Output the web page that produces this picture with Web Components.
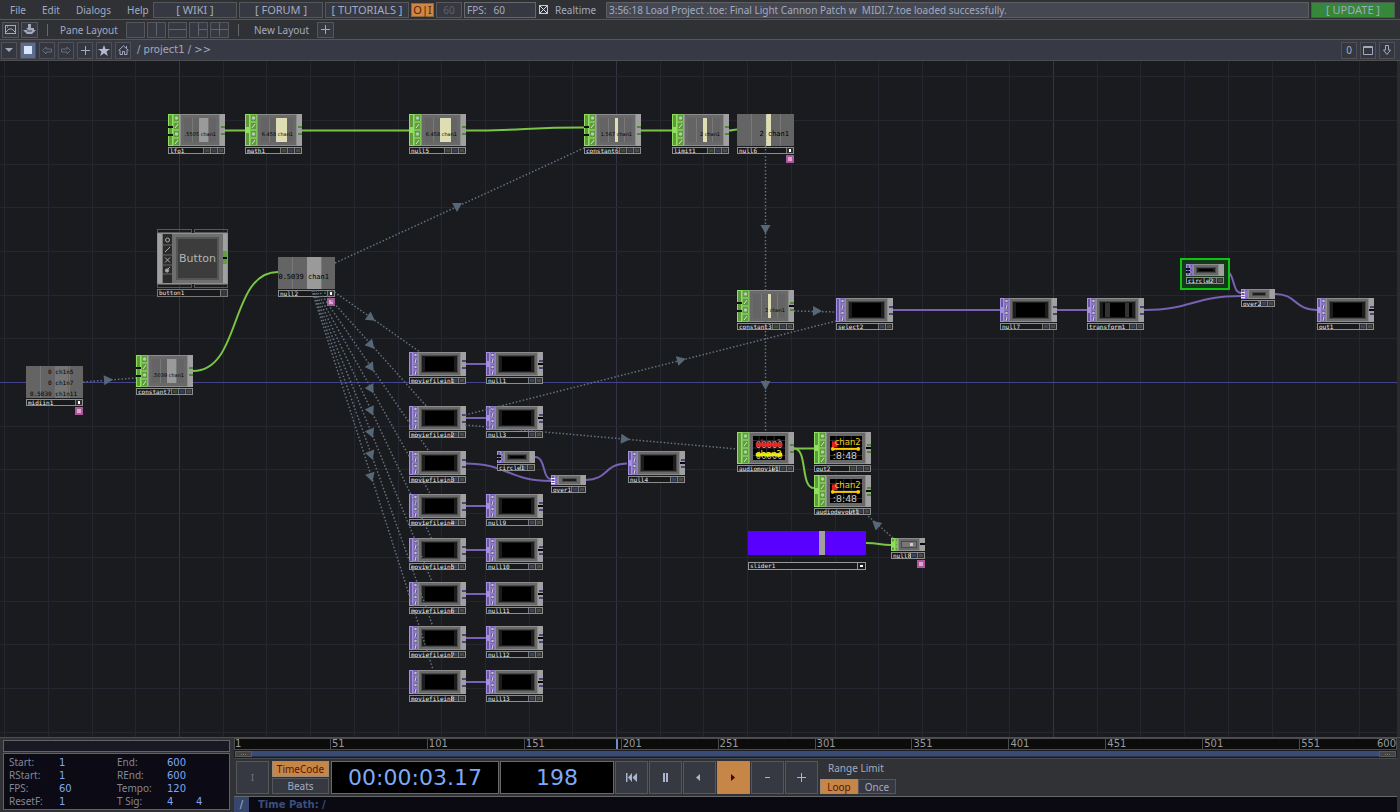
<!DOCTYPE html>
<html lang="en">
<head>
<meta charset="utf-8">
<title>project1</title>
<style>
html, body { margin: 0; height: 100%; background: #1a1b1e; }
body { font: 10px/14px "Noto Sans", sans-serif; color: #a3aac0; overflow: hidden; }
</style>
</head>
<body>
<td-app></td-app>
<script>
const SVG = (w, h, body, extra = '') => `<svg width="${w}" height="${h}" viewBox="0 0 ${w} ${h}" ${extra} aria-hidden="true">${body}</svg>`;

const BASE = `
  :host, *, *::before, *::after { box-sizing: border-box; }
  button, input, a { font: inherit; color: inherit; margin: 0; padding: 0; border-radius: 0; text-decoration: none; }
  button { background: #363942; border: 1px solid #55575c; display: flex; align-items: center; justify-content: center; white-space: pre; }
  input { background: none; border: 0; outline: 0; min-width: 0; }
  svg { display: block; flex: none; }
`;
function define(name, html, setup) {
  const tpl = document.createElement('template');
  tpl.innerHTML = html;
  customElements.define(name, class extends HTMLElement {
    connectedCallback() {
      if (this.shadowRoot) return;
      const root = this.attachShadow({ mode: 'open' });
      root.append(tpl.content.cloneNode(true));
      if (setup) setup(this, root);
    }
  });
}

/* ---------- menu bar ---------- */
define('td-menu-bar', `<style>${BASE}
  :host { display: flex; height: 20px; background: #2f3135; border-bottom: 1px solid #55575a; align-items: center; padding: 0 5px 0 1px; gap: 2px; }
  .menu { border: 0; background: none; height: 16px; padding: 0 8px; }
  nav { display: flex; width: 150px; padding-left: 1px; }
  .link { display: flex; align-items: center; justify-content: center; width: 84px; height: 16px; border: 1px solid #55575c; background: #363942; font-size: 11px; }
  .oi { width: 23px; height: 14px; background: #cc8844; border-color: #8a6a45; color: #5c1a08; font-size: 11px; }
  .sixty { width: 26px; height: 16px; color: #5f626c; }
  .fps { display: flex; width: 72px; height: 16px; border: 1px solid #66686e; background: #363942; padding: 0 2px; gap: 7px; align-items: center; line-height: 12px; }
  .fps input { width: 30px; }
  .rt { display: flex; gap: 7px; align-items: center; width: 66px; padding-left: 1px; }
  .rt input { appearance: none; width: 9px; height: 9px; border: 1px solid #c4c8d4; background: linear-gradient(45deg, transparent 43%, #dde 43% 57%, transparent 57%), linear-gradient(-45deg, transparent 43%, #dde 43% 57%, transparent 57%); }
  .status { flex: 1; height: 16px; border: 1px solid #5c5e63; background: #454851; padding: 0 2px; line-height: 14px; white-space: pre; overflow: hidden; }
  .upd { width: 84px; height: 16px; background: #35873a; border: 1px solid #4f5b52; font-size: 11px; }
</style>
<nav><button class="menu">File</button><button class="menu">Edit</button><button class="menu">Dialogs</button><button class="menu">Help</button></nav>
<a class="link" href="#wiki">[ WIKI ]</a><a class="link" href="#forum">[ FORUM ]</a><a class="link" href="#tutorials">[ TUTORIALS ]</a>
<button class="oi">O|I</button><button class="sixty">60</button>
<label class="fps">FPS: <input value="60"></label>
<label class="rt"><input type="checkbox" checked>Realtime</label>
<div class="status">3:56:18 Load Project .toe: Final Light Cannon Patch w  MIDI.7.toe loaded successfully.</div>
<button class="upd">[ UPDATE ]</button>`);

/* ---------- pane layout bar ---------- */
const layoutIcon = d => `<button class="lay" aria-label="layout">${SVG(17, 13, `<path d="${d}" stroke="#62656c" fill="none"/>`)}</button>`;
define('td-layout-bar', `<style>${BASE}
  :host { display: flex; height: 20px; background: #2f3135; border-bottom: 1px solid #55575a; align-items: center; padding-left: 2px; gap: 2px; }
  button { width: 17px; height: 16px; }
  .lay { width: 19px; height: 16px; }
  i { width: 1px; height: 12px; background: #66686e; margin: 0 10px 0 7px; }
  span { margin-right: 6px; }
</style>
<button aria-label="palette">${SVG(11, 9, '<rect x=".5" y=".5" width="10" height="8" fill="none" stroke="#a3aac0"/><path d="M1 7 L4 4 H7 L10 7 M2 2 H3" stroke="#a3aac0" fill="none"/>')}</button>
<button aria-label="explorer">${SVG(13, 11, '<path d="M5 0H8V4H11V6H13L9 10H4L0 6H5L3 4H5Z" fill="#a3aac0"/><path d="M4 7H9" stroke="#363942"/>')}</button>
<i></i><span>Pane Layout</span>
${layoutIcon('')}${layoutIcon('M8.5 0V13')}${layoutIcon('M0 6.5H17')}${layoutIcon('M8.5 0V13M8.5 6.5H17')}${layoutIcon('M8.5 0V13M0 6.5H17')}
<i></i><span style="margin-left:3px">New Layout</span>
<button aria-label="add layout">${SVG(9, 9, '<path d="M4.500 0V9M0 4.500H9" stroke="#a3aac0"/>')}</button>`);

/* ---------- path bar ---------- */
define('td-path-bar', `<style>${BASE}
  :host { display: flex; height: 21px; background: #373a44; border-bottom: 1px solid #4c4e52; align-items: center; padding: 0 5px 0 1px; gap: 3px; }
  button { width: 16px; height: 17px; background: #34373f; border-color: #4f5157; }
  .on { background: #5b6c8e; }
  nav { flex: 1; padding-left: 3px; white-space: pre; font-family: "DejaVu Sans", sans-serif; }
</style>
<button aria-label="pane type">${SVG(8, 5, '<path d="M0 0H8L4 4Z" fill="#a3aac0"/>')}</button>
<button class="on" aria-label="network view">${SVG(8, 8, '<rect width="8" height="8" fill="#dbe4fa"/>')}</button>
<button aria-label="back">${SVG(10, 9, '<path d="M.5 4.500 4 1V3H9.500V6H4V8Z" fill="none" stroke="#676c7a"/>')}</button>
<button aria-label="forward">${SVG(10, 9, '<path d="M9.500 4.500 6 1V3H.5V6H6V8Z" fill="none" stroke="#676c7a"/>')}</button>
<button aria-label="add">${SVG(9, 9, '<path d="M4.500 0V9M0 4.500H9" stroke="#a3aac0"/>')}</button>
<button aria-label="bookmark">${SVG(12, 11, '<path d="M6 0 7.500 4H12L8.500 6.500 9.800 11 6 8.300 2.200 11 3.500 6.500 0 4H4.500Z" fill="#b4bbd0"/>')}</button>
<button aria-label="home">${SVG(11, 10, '<path d="M.5 5.500 5.500 .8 10.500 5.500M2 5V9.500H4.500V6.500H6.500V9.500H9V5M8.500 1V3" fill="none" stroke="#a3aac0"/>')}</button>
<nav>/ project1 / &gt;&gt;</nav>
<button>0</button>
<button aria-label="maximize">${SVG(10, 9, '<path d="M.5 .5H9.500V8.500H.5ZM0 1.500H10" fill="none" stroke="#a3aac0"/>')}</button>
<button aria-label="down">${SVG(8, 10, '<path d="M2.500 .5H5.500V5H7.500L4 9.500 .5 5H2.500Z" fill="none" stroke="#a3aac0"/>')}</button>`);

/* ---------- viewers inside operators ---------- */
define('chop-trace', `<style>
  :host { position: relative; display: block; width: 100%; height: 100%; background: #646464; font: 5px/6px "DejaVu Sans", sans-serif; color: #000; }
  :host([size]) { font-family: "DejaVu Sans Mono", monospace; }
  i { position: absolute; top: 0; bottom: 0; }
  span { position: absolute; white-space: pre; }
</style>`, (el, root) => {
  const at = n => el.getAttribute(n);
  const bar = (x, w, c) => { const i = document.createElement('i'); i.style.cssText = `left:${x}%;width:${w}%;background:${c}`; root.append(i); };
  bar(24, 2, '#787878'); bar(75, 2, '#787878');
  bar(+at('x'), +at('w'), at('color'));
  at('rows').split('|').forEach((t, k, all) => {
    const s = document.createElement('span');
    s.textContent = t;
    s.style.cssText = `font-size:${at('size') || 5}px;top:${all.length > 1 ? [20, 52, 86][k] : at('size') ? 64 : 68}%;transform:translateY(-50%);right:${at('gap') || 0}px`;
    root.append(s);
  });
});
define('audio-trace', `<style>
  :host { position: relative; display: block; width: 100%; height: 100%; background: #000; }
  svg { display: block; width: 100%; height: 100%; }
</style>`, (el, root) => {
  const movie = el.hasAttribute('movie');
  const grid = '<path d="M0 4.500H34M0 12.500H34M0 20.500H34M6.500 0V25M14.500 0V25M22.500 0V25" stroke="#333"/>';
  root.innerHTML += SVG(34, 25, grid + (movie
    ? `<g font-family="DejaVu Sans" font-size="9"><text x="3" y="12" fill="#bbb">00000</text><text x="3" y="24" fill="#bbb">00000</text></g><path d="M3 9H31" stroke="#e22" stroke-width="4"/><path d="M3 19.500H31" stroke="#ee0" stroke-width="3"/><g font-family="DejaVu Sans" font-size="9"><text x="3" y="10" fill="#f22">chan1</text><text x="3" y="22" fill="#ee0">chan2</text></g>`
    : `<path d="M2 8.500H8" stroke="#d22" stroke-width="6"/><g font-family="DejaVu Sans"><text x="3" y="24" font-size="10" fill="#ccc">:8:48</text><text x="5" y="9" font-size="9" fill="#ec2">chan2</text></g><path d="M3 13.500H31" stroke="#fc0" stroke-width="2"/><circle cx="3" cy="13.500" r="2" fill="#fc0"/><circle cx="30" cy="13.500" r="2" fill="#fc0"/>`));
});

/* ---------- operator node ---------- */
const FAMILY = {
  chop: { a: '#5f9a3c', b: '#7cc455', l: '#8fe05f', strip: [5, 7] },
  top:  { a: '#6a589c', b: '#8a76c2', l: '#a48fe0', strip: [4, 5] },
};
define('op-node', `<style>${BASE}
  :host { position: absolute; display: flex; flex-direction: column; gap: 1px; width: var(--w); }
  .body { display: flex; height: var(--h); background: #757575; }
  .face { flex: 1; min-width: 0; border: 1px solid #8c8c8c; padding: var(--pad); background: #696969; }
  .out { width: 5px; background: #a0a0a0; position: relative; }
  .out::before, .out::after { content: ""; position: absolute; left: 1px; right: 0; height: 2px; top: calc(50% - 4px); background: var(--port); }
  .out::after { top: calc(50% + 3px); }
  .small .out::before, .small .out::after { display: none; }
  :host([open]) .out { background: linear-gradient(#a0a0a0 calc(50% - 1px), #08080a 0 calc(50% + 1px), #a0a0a0 0); }
  .tag { display: flex; height: 7px; border: 1px solid #8d8d8d; background: #18191b; }
  .name { flex: 1; min-width: 0; color: #f0f0f0; font: 6px/5px "DejaVu Sans Mono", monospace; padding-left: 1px; white-space: pre; position: relative; z-index: 1; }
  .tag i { width: 7px; border-left: 1px solid #777; background: #303030; padding: 1px; }
  .tag i::before { content: ""; display: block; height: 3px; background: var(--c, #4a4a4a); }
  .viewer .face { padding: 0; border: 0; }
  .viewer + .tag i { padding: 1px 2px; }
  .pin { position: absolute; top: 100%; right: 0; margin-top: 1px; width: 8px; height: 8px; background: #d8a8cc; border: 2px solid #b0569c; }
  :host([selected]) { outline: 2px solid #0fc40f; outline-offset: 4px; box-shadow: 0 0 0 4px #123a1a; background: #123a1a; }
</style>
<div class="body"><div class="face"><slot></slot></div></div>
<div class="tag"><span class="name"></span></div>`, (el, root) => {
  const f = FAMILY[el.getAttribute('family')], w = +el.dataset.w, h = +el.dataset.h;
  const isChop = el.getAttribute('family') === 'chop';
  const body = root.querySelector('.body'), tag = root.querySelector('.tag'), kind = el.dataset.kind;
  el.style.cssText += `--w:${w}px;--h:${h}px;--port:${isChop ? '#4f8a35' : '#4c4480'};--pad:${h < 12 ? '3px 4px' : kind === 'small' ? '3px' : '3px'}`;
  root.querySelector('.name').textContent = el.dataset.name;
  body.classList.add(kind);
  if (kind === 'viewer') {
    tag.insertAdjacentHTML('beforeend', '<i style="--c:#ffffff"></i>');
  } else {
    const [s, c] = kind === 'small' ? [4, 3] : f.strip, n = kind === 'small' ? 3 : 4, step = h / n;
    let g = `<rect width="${s + c}" height="${h}" fill="${f.b}"/><rect x=".5" y=".5" width="${s - 1}" height="${h - 1}" fill="${f.a}" stroke="${f.l}"/>`;
    for (let i = 0; i < n; i++) {
      const cy = (i + .5) * step;
      g += `<rect x="${s + .5}" y="${i * step + .5}" width="${c - 1}" height="${step - 1}" fill="${f.a}" stroke="${f.b}"/>`;
      if (kind !== 'small') g += i % 2 ? `<path d="M${s + 2} ${cy + 2}L${s + c - 2} ${cy - 2}" stroke="#d5dfd0" stroke-width="1"/>` : `<circle cx="${s + c / 2}" cy="${cy}" r="${c / 4}" fill="#b9c9b4"/>`;
    }
    if (el.dataset.in === 'wired') g += `<rect y="${h / 2 - 3}" width="${s}" height="6" fill="${f.l}"/>`;
    if (el.dataset.in === 'open') for (const p of [.36, .62]) g += `<rect y="${Math.round(h * p)}" width="${s}" height="2" fill="#101113"/>`;
    if (el.dataset.in === 'multi') for (const p of [.3, .55, .78]) g += `<rect y="${Math.round(h * p)}" width="${s}" height="1" fill="#f0e8ff"/>`;
    body.insertAdjacentHTML('afterbegin', SVG(s + c, h, g));
    body.insertAdjacentHTML('beforeend', '<div class="out"></div>');
    const flags = isChop && kind !== 'small' ? ['#35502e', '#2b4266', '#4a4a4a'] : ['#2f4570', '#4a4a4a'];
    tag.insertAdjacentHTML('beforeend', flags.map(k => `<i style="--c:${k}"></i>`).join(''));
  }
  if (el.dataset.pin) tag.insertAdjacentHTML('afterend', '<span class="pin"></span>');
});
define('top-screen', `<style>
  :host { box-sizing: border-box; display: block; height: 100%; border: 1px solid #1c1c1c; border-width: 1px 3px; background: #000; box-shadow: 0 0 0 1px #4a4a4a; }
  :host([banded]) { background: linear-gradient(90deg, #000 0 8%, #333 0 24%, #000 0 76%, #333 0 88%, #000 0); }
  :host([mini]) { border-width: 1px 2px; background: #000; }
  :host([grey]) { border-color: #777; background: linear-gradient(90deg, #777 60%, #ccc 0 90%, #777 0); }
</style>`);

define('button-comp', `<style>${BASE}
  :host { position: absolute; display: flex; flex-direction: column; width: 71px; }
  .cap { height: 4px; display: flex; gap: 2px; } .cap i { flex: 1; border: 1px solid #585858; }
  .body { display: flex; height: 51px; border: 1px solid #909090; }
  .l, .r { width: 4px; background: #a0a0a0; }
  .r { background: linear-gradient(#a0a0a0 34%, #5fa03f 0 47%, #08080a 0 51%, #5fa03f 0 62%, #a0a0a0 0); }
  .ic { width: 10px; background: #2a2a2a; border-left: 1px solid #777; padding-top: 1px; }
  .face { flex: 1; background: #6f6f6f; padding: 3px 4px; }
  button { width: 100%; height: 100%; background: #3c3c3c; border: 2px solid #555; color: #b4b4b4; font: 11px/14px "DejaVu Sans", sans-serif; }
  .tag { display: flex; height: 8px; margin-top: 1px; border: 1px solid #777; background: #18191b; font: 6px/6px "DejaVu Sans Mono", monospace; color: #e4e4e4; padding-left: 1px; justify-content: space-between; }
  .tag i { width: 7px; border-left: 1px solid #777; background: #383838; }
</style>
<div class="cap"><i></i><i></i></div>
<div class="body"><div class="l"></div><div class="ic">${SVG(9, 40, '<g stroke="#aaa" fill="none"><circle cx="4.500" cy="5" r="2"/><path d="M2 17L7 12M2 22.500L7 27.500M7 22.500L2 27.500"/><circle cx="4" cy="35.500" r="1.600" fill="#aaa"/><path d="M5 34L7 32"/><path d="M0 10H9M0 20H9M0 30H9M0 39H9" stroke="#666"/></g>')}</div><div class="face"><button>Button</button></div><div class="r"></div></div>
<div class="cap"><i></i><i></i></div>
<div class="tag">button1<i></i></div>`);
define('slider-comp', `<style>${BASE}
  :host { position: absolute; display: flex; flex-direction: column; width: 118px; gap: 7px; }
  input { appearance: none; display: block; width: 100%; height: 24px; background: #5a00ff; }
  input::-webkit-slider-thumb { appearance: none; width: 6px; height: 24px; background: #a0a0a0; }
  .tag { display: flex; justify-content: space-between; height: 8px; border: 1px solid #999; background: #18191b; font: 6px/6px "DejaVu Sans Mono", monospace; color: #e4e4e4; padding-left: 1px; }
  .tag i { width: 8px; border-left: 1px solid #999; padding: 2px; } .tag i::before { content: ""; display: block; height: 2px; background: #fff; }
</style>
<input type="range" min="0" max="1000" value="632" aria-label="slider1">
<div class="tag">slider1<i></i></div>`);

/* ---------- network canvas ---------- */
const trace = (rows, x, w, color, more = '') => `<chop-trace rows="${rows}" x="${x}" w="${w}" color="${color}" ${more}></chop-trace>`;
const SCREEN = '<top-screen></top-screen>', MINI = '<top-screen mini></top-screen>';
const CREAM = '#deddb4', PALE = '#9a9a9a';
const op = (family, kind, name, x, y, w, h, input, inner, attrs = '') =>
  `<op-node family="${family}" data-kind="${kind}" data-name="${name}" data-w="${w}" data-h="${h}" data-in="${input}" style="left:${x}px;top:${y - 61}px" ${attrs}>${inner}</op-node>`;
const chop = (n, x, y, input, inner, a) => op('chop', 'full', n, x, y, 57, 32, input, inner, a);
const top_ = (n, x, y, input, inner = SCREEN, a = '') => op('top', 'full', n, x, y, 57, 24, input, inner, a);
const movieY = [352, 406, 451, 494, 538, 582, 626, 670];
const nullNames = ['null1', 'null3', null, 'null9', 'null10', 'null11', 'null12', 'null13'];

const wires = [
  ['g', 'M225 130.500H245'], ['g', 'M301 130.500H409'], ['g', 'M465 130.500C525 130.500 525 127.500 584 127.500'],
  ['g', 'M641 130.500H672'], ['g', 'M729 130.500C733 130.500 733 129.500 737 129.500'],
  ['g', 'M193 371C242 371 229 272 278 272'], ['g', 'M794 448.500H814'], ['g', 'M794 448.500C808 448.500 800 488 814 488'],
  ['g', 'M866 543C880 543 878 545 891 545'],
  ['p', 'M893 310H1001'], ['p', 'M1057 310H1087'], ['p', 'M1144 310C1192 310 1193 296 1241 296'],
  ['p', 'M1225 271C1235 271 1232 293 1241 293'], ['p', 'M1275 294C1297 294 1294 310 1317 310'],
  ['p', 'M535 457C546 457 542 479 551 479'], ['p', 'M465 463.500C508 463.500 508 481 551 481'], ['p', 'M586 480C608 480 604 463.500 627 463.500'],
  ...movieY.map((y, i) => ['p', nullNames[i] ? `M465 ${y + 12}H486` : '']),
];
/* reference links: x1 y1 x2 y2, arrow x, arrow y, optional heading */
const links = [
  [335, 263, 584, 148, 457, 207, 90], [765.5, 114, 765.5, 289, 765.5, 229], [765.5, 289, 765.5, 432, 765.5, 385],
  [794, 311, 836, 312, 817, 311], [465, 415, 836, 321, 681, 360], [465, 425, 737, 449, 625, 439],
  [893, 538, 868, 516, 876, 524], [83, 382, 136, 378, 108, 380],
  ...movieY.map(y => {
    const dx = 131, dy = y + 12 - 272, t1 = 18 / dy, t2 = (y - 272) / dy;
    return [306 + dx * t1, 290, 306 + dx * t2, y, 371, 272 + dy / 2];
  }),
];
function drawNetwork() {
  let s = '';
  for (let i = -4; i <= 50; i++) {
    const x = Math.round(180 + i * 43.7) - .5;
    s += `<path d="M${x} 61V2000" stroke="${i % 10 ? '#25262f' : '#32324c'}"/>`;
  }
  for (let i = -7; i <= 30; i++) {
    const y = Math.round(382 + i * 43.7) + .5;
    if (i) s += `<path d="M0 ${y}H4000" stroke="#25262f"/>`;
  }
  s += '<path d="M0 382.500H4000" stroke="#43428a"/>';
  for (const [c, d] of wires) if (d) s += `<path d="${d}" fill="none" stroke="${c === 'g' ? '#7ac544' : '#7661b2'}" stroke-width="2"/>`;
  return s;
}
function drawLinks() {
  return links.map(([x1, y1, x2, y2, ax, ay, a]) => {
    const ang = a ?? Math.atan2(y2 - y1, x2 - x1) * 180 / Math.PI;
    return `<path d="M${x1} ${y1}L${x2} ${y2}" stroke="#62727f" stroke-width="1.500" stroke-dasharray="1.500 2"/><path d="M-4 -5L5 0L-4 5Z" transform="translate(${ax} ${ay}) rotate(${ang})" fill="#566877"/>`;
  }).join('');
}
define('td-network', `<style>
  :host { position: relative; display: block; flex: 1; min-height: 0; overflow: hidden; background: #1a1b1e; border-right: 3px solid #2a2b2e; }
  .layer { position: absolute; inset: 0; width: 100%; height: 100%; }
  .links { pointer-events: none; }
</style>
<svg class="layer" aria-hidden="true"><g transform="translate(0 -61)">${drawNetwork()}</g></svg>
${chop('lfo1', 168, 114, 'open', trace('.5505 chan1', 48, 26, PALE))}
${chop('math1', 245, 114, 'wired', trace('6.458 chan1', 46, 34, CREAM))}
${chop('null5', 409, 114, 'wired', trace('6.458 chan1', 46, 34, CREAM))}
${chop('constant6', 584, 114, 'open', trace('1.567 chan1', 46, 10, CREAM))}
${chop('limit1', 672, 114, 'wired', trace('2 chan1', 46, 12, CREAM))}
${op('chop', 'viewer', 'null6', 737, 114, 57, 32, '', trace('2 chan1', 50, 10, CREAM, 'size="7" gap="5"'), 'data-pin="1"')}
${op('chop', 'viewer', 'null2', 278, 257, 57, 32, '', trace('0.5039 chan1', 50, 26, PALE, 'size="7" gap="6"'), 'data-pin="1"')}
${op('chop', 'viewer', 'midiin1', 26, 366, 57, 32, '', trace('0 ch1n5 |0 ch1n7 |0.5039 ch1n11', 50, 24, '#757575', 'size="6" gap="6"'), 'data-pin="1"')}
${chop('constant7', 136, 355, 'open', trace('.5039 chan1', 48, 26, PALE), '')}
${chop('constant3', 737, 290, 'open', trace('2 chan1', 46, 11, CREAM), 'open')}
${chop('audiomovie1', 737, 432, '', '<audio-trace movie></audio-trace>')}
${chop('out2', 814, 432, 'wired', '<audio-trace></audio-trace>', 'open')}
${chop('audiodevout1', 814, 475, 'wired', '<audio-trace></audio-trace>', 'open')}
${movieY.map((y, i) => top_('moviefilein' + (i + 1), 409, y, '') + (nullNames[i] ? top_(nullNames[i], 486, y, 'wired', SCREEN, 'open') : '')).join('')}
${top_('null4', 628, 451, 'wired', SCREEN, 'open')}
${top_('select2', 836, 298, '')}${top_('null7', 1000, 298, 'wired')}
${top_('transform1', 1087, 298, 'wired', '<top-screen banded></top-screen>')}${top_('out1', 1317, 298, 'wired', SCREEN, 'open')}
${op('top', 'small', 'circle1', 497, 451, 38, 12, 'open', MINI)}
${op('top', 'small', 'over1', 551, 475, 35, 10, 'multi', MINI)}
${op('top', 'small', 'circle2', 1186, 264, 38, 12, 'open', MINI, 'selected')}
${op('top', 'small', 'over2', 1241, 289, 34, 10, 'multi', MINI)}
${op('chop', 'small', 'null8', 891, 538, 34, 13, 'wired', '<top-screen mini grey></top-screen>', 'open data-pin="1"')}
<button-comp style="left:157px;top:168px"></button-comp>
<slider-comp style="left:748px;top:470px"></slider-comp>
<svg class="layer links" aria-hidden="true"><g transform="translate(0 -61)">${drawLinks()}</g></svg>`);

/* ---------- time settings ---------- */
const field = (label, id, value) => `<label for="${id}">${label}</label><input id="${id}" value="${value}">`;
define('td-time-settings', `<style>${BASE}
  :host { display: flex; flex-direction: column; width: 231px; flex: none; padding: 2px 0 2px 3px; border-right: 1px solid #303236; background: #303236; gap: 1px; }
  .bar { height: 12px; border: 1px solid #606268; background: #181922; }
  form { flex: 1; margin: 0; border: 1px solid #606268; background: #0c0a14; display: grid; grid-template-columns: 50px 58px 50px 29px 1fr; grid-auto-rows: 13px; align-items: center; padding: 2px 0 0 5px; color: #828794; line-height: 13px; }
  input { width: 100%; height: 13px; font: 10px/13px "DejaVu Sans", sans-serif; color: #7ea6f4; }
</style>
<div class="bar"></div>
<form>${field('Start:', 'a', 1)}${field('End:', 'b', 600)}<span></span>
${field('RStart:', 'c', 1)}${field('REnd:', 'd', 600)}<span></span>
${field('FPS:', 'e', 60)}${field('Tempo:', 'f', 120)}<span></span>
${field('ResetF:', 'g', 1)}${field('T Sig:', 'h', 4)}<input value="4" aria-label="T Sig denominator"></form>`);

/* ---------- ruler ---------- */
define('td-ruler', `<style>${BASE}
  :host { position: relative; display: flex; flex-direction: column; }
  .marks { display: flex; height: 12px; background: #0c0c0d; border: 1px solid #4c4c4c; font: 10px/10px "DejaVu Sans", sans-serif; color: #999a9c; }
  .marks span { flex: 50 1 0; border-left: 1px solid #4c4c4c; padding-left: 1px; display: flex; justify-content: space-between; }
  .marks span:first-child { border-left-color: transparent; padding-left: 0; margin-left: -1px; }
  .marks b { font-weight: 400; }
  .head { position: absolute; left: calc(100% * 197 / 600); top: 1px; width: 2px; height: 10px; background: #6f8cd0; }
  .scroll { display: flex; height: 9px; padding: 1px; background: #1c1d20; border-bottom: 1px solid #46484c; }
  .bar { flex: 1; background: #3a4c75; border-bottom: 1px solid #26314c; }
  .grip { width: 17px; background: #444; border: 1px solid #5a5a58; display: flex; align-items: center; justify-content: center; gap: 1px; }
  .grip i { width: 1px; height: 1px; background: #777; }
</style>
<div class="marks">${Array.from({ length: 12 }, (_, i) => `<span><b>${1 + i * 50}</b>${i === 11 ? '<b>600</b>' : ''}</span>`).join('')}</div>
<div class="head"></div>
<div class="scroll"><div class="grip"><i></i><i></i><i></i></div><div class="bar"></div><div class="grip"><i></i><i></i><i></i></div></div>`);

/* ---------- transport ---------- */
define('td-transport', `<style>${BASE}
  :host { display: flex; height: 38px; background: #303236; border-bottom: 1px solid #66686a; padding: 2px 0 0 2px; gap: 1px; align-items: flex-start; }
  button { width: 33px; height: 33px; font-size: 12px; }
  .i { color: #6c7078; margin-right: 2px; font: 10px "DejaVu Serif", serif; }
  .mode { display: flex; flex-direction: column; gap: 1px; width: 57px; margin-right: 1px; }
  .mode button { width: 100%; height: 16px; font-size: 10px; }
  .on, .mode .on, .limit .on { background: #c68648; border-color: #a08a78; color: #5a1404; }
  output { display: flex; align-items: center; justify-content: center; height: 33px; background: #000; border: 1px solid #66686a; color: #7ea8f8; font: 22px/30px "DejaVu Sans", sans-serif; }
  .tc { width: 168px; } .fr { width: 114px; }
  .keys { display: flex; gap: 1px; }
  .keys button { width: 33px; }
  .limit { padding-left: 1px; }
  .limit div { display: flex; }
  .limit p { margin: 0 0 4px; padding: 0 0 0 8px; height: 14px; line-height: 14px; }
  .limit button { width: 38px; height: 15px; font-size: 10px; }
</style>
<button class="i">I</button>
<div class="mode"><button class="on">TimeCode</button><button>Beats</button></div>
<output class="tc">00:00:03.17</output><output class="fr">198</output>
<div class="keys">
<button aria-label="to start">${SVG(11, 9, '<path d="M0 0H1.500V9H0ZM6 0V9L2 4.500ZM11 0V9L6.500 4.500Z" fill="#a9b4d0"/>')}</button>
<button aria-label="pause">${SVG(5, 9, '<path d="M0 0H2V9H0ZM3 0H5V9H3Z" fill="#a9b4d0"/>')}</button>
<button aria-label="reverse">${SVG(8, 7, '<path d="M4 0V7L0 3.500Z" fill="#a9b4d0"/>')}</button>
<button class="on" aria-label="play">${SVG(10, 7, '<path d="M2 0V7L6 3.500Z" fill="#3a0a00"/>')}</button>
<button aria-label="slower">${SVG(5, 9, '<path d="M0 4.500H5" stroke="#a9b4d0"/>')}</button>
<button aria-label="faster">${SVG(9, 9, '<path d="M0 4.500H9M4.500 0V9" stroke="#a9b4d0"/>')}</button>
</div>
<div class="limit"><p>Range Limit</p><div><button class="on">Loop</button><button>Once</button></div></div>`);

define('td-path-field', `<style>${BASE}
  :host { display: flex; flex: 1; background: #0b0a13; color: #3b4e7c; align-items: stretch; font-family: "DejaVu Sans", sans-serif; }
  button { width: 15px; border: 0; background: #36466d; color: #aab4cc; }
  input { flex: 1; padding-left: 9px; font-weight: 700; }
</style><button>/</button><input value="Time Path: /" aria-label="time path">`);

define('td-app', `<style>
  :host { display: flex; flex-direction: column; height: 100vh; }
  .bottom { box-sizing: border-box; display: flex; height: 75px; background: #303236; border-top: 1px solid #4c4e52; }
  .time { flex: 1; min-width: 0; display: flex; flex-direction: column; margin: 0 3px; }
</style>
<td-menu-bar></td-menu-bar><td-layout-bar></td-layout-bar><td-path-bar></td-path-bar>
<td-network></td-network>
<div class="bottom"><td-time-settings></td-time-settings>
<div class="time"><td-ruler></td-ruler><td-transport></td-transport><td-path-field></td-path-field></div></div>`);
</script>
</body>
</html>
